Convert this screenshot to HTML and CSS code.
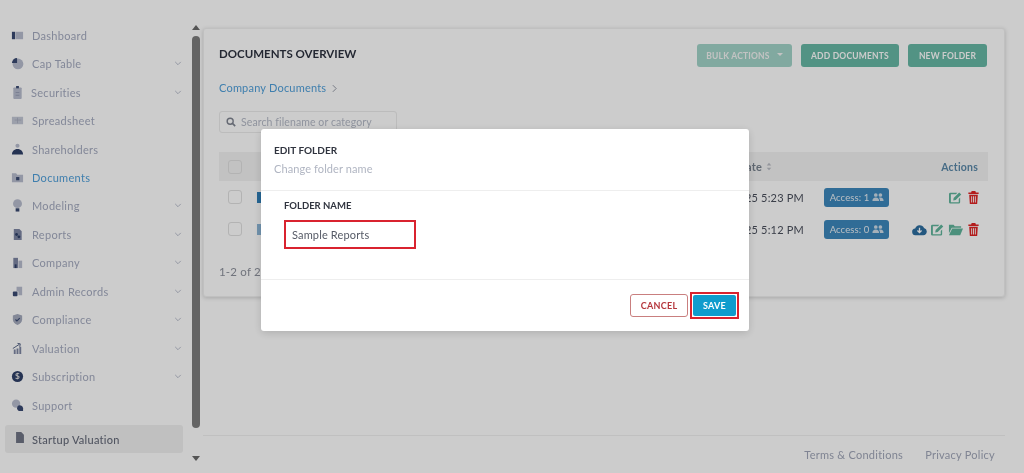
FILE: index.html
```html
<!DOCTYPE html>
<html lang="en">
<head>
<meta charset="utf-8">
<title>Documents Overview</title>
<link rel="stylesheet" href="styles.css">
</head>
<body>
<svg class="defs" width="0" height="0" aria-hidden="true">
  <symbol id="chev" viewBox="0 0 10 6"><path d="M1.5 1l3.5 3.5L8.5 1" fill="none" stroke="currentColor" stroke-width="1.1"/></symbol>
  <symbol id="edit" viewBox="0 0 16 14"><path d="M2.5 2h7.5l-1.5 1.500h-5.500v8.500h8.500v-3.500l1.500-1.500v5a1.500 1.500 0 0 1-1.500 1.500h-9a1.500 1.500 0 0 1-1.500-1.500v-8.500a1.500 1.500 0 0 1 1.500-1.500z" fill="currentColor"/><path d="M6 7.500l6-6 2.200 2.200-6 6-2.600.4z" fill="currentColor"/></symbol>
  <symbol id="trash" viewBox="0 0 12 14"><path d="M4 0h4l.6 1.500h3v1.600h-11.200v-1.600h3zM1.300 4h9.400l-.7 10h-8zM3.500 5.500v7h1v-7zM5.500 5.500v7h1v-7zM7.500 5.500v7h1v-7z" fill="currentColor" fill-rule="evenodd"/></symbol>
  <symbol id="users" viewBox="0 0 14 10"><circle cx="4.200" cy="2.500" r="2.300" fill="currentColor"/><circle cx="10" cy="2.500" r="2.300" fill="currentColor"/><path d="M0 10c0-3 1.500-4.500 4.200-4.500s4.200 1.500 4.200 4.500zM9.500 10c0-1.800-.4-3.300-1.300-4.200.6-.2 1.200-.3 1.900-.3 2.500 0 3.900 1.500 3.900 4.500z" fill="currentColor"/></symbol>
</svg>

<div class="page">
  <aside class="sidebar">
    <nav class="nav">
      <a class="nav-item"><svg class="nav-icon" viewBox="0 0 14 14"><rect x="1" y="3" width="3.500" height="8" fill="#3a4a72"/><rect x="5" y="3" width="8" height="8" fill="#b8bdcf"/></svg><span>Dashboard</span></a>
      <a class="nav-item has-sub"><svg class="nav-icon" viewBox="0 0 14 14"><circle cx="7.500" cy="7.500" r="5.800" fill="#b8bdcf"/><path d="M6.500 1v5.500H1A5.500 5.500 0 0 1 6.500 1z" fill="#3a4a72"/></svg><span>Cap Table</span><svg class="chev"><use href="#chev"/></svg></a>
      <a class="nav-item has-sub tight"><svg class="nav-icon" viewBox="0 0 14 14"><rect x="2.500" y="1.500" width="9" height="12.500" rx="1" fill="#b8bdcf"/><rect x="5.500" y="0" width="3" height="2.500" fill="#3a4a72"/><path d="M5 7h4M5 10h4" stroke="#8e95ad" stroke-width=".8"/></svg><span>Securities</span><svg class="chev"><use href="#chev"/></svg></a>
      <a class="nav-item"><svg class="nav-icon" viewBox="0 0 14 14"><rect x="1" y="3" width="12" height="8" fill="#c4c8d6"/><path d="M7 4v6M4 6.500h7" stroke="#a4aabd" stroke-width=".8"/></svg><span>Spreadsheet</span></a>
      <a class="nav-item"><svg class="nav-icon" viewBox="0 0 14 14"><circle cx="7" cy="3" r="2.200" fill="#b8bdcf"/><path d="M1 12.500c0-3.500 2.500-6 6-6s6 2.500 6 6z" fill="#2f4068"/></svg><span>Shareholders</span></a>
      <a class="nav-item current"><svg class="nav-icon" viewBox="0 0 14 14"><path d="M1 2.500h4.500l1.200 1.500h6.300v8h-12z" fill="#b8bdcf"/><rect x="5.500" y="6.500" width="3.500" height="3.500" fill="#3a4a72"/></svg><span>Documents</span></a>
      <a class="nav-item has-sub"><svg class="nav-icon" viewBox="0 0 14 14"><circle cx="7" cy="5" r="4.800" fill="#b8bdcf"/><rect x="5" y="10" width="4" height="3.500" fill="#3a4a72"/></svg><span>Modeling</span><svg class="chev"><use href="#chev"/></svg></a>
      <a class="nav-item has-sub"><svg class="nav-icon" viewBox="0 0 14 14"><path d="M3 1h6l2.500 2.500V13H3z" fill="#7d86a3"/><circle cx="6" cy="7" r="1.500" fill="#2f4068"/><circle cx="8.500" cy="9.500" r="1.500" fill="#2f4068"/></svg><span>Reports</span><svg class="chev"><use href="#chev"/></svg></a>
      <a class="nav-item has-sub"><svg class="nav-icon" viewBox="0 0 14 14"><rect x="2.500" y="2" width="5" height="11" fill="#7d86a3"/><rect x="8" y="5" width="4" height="8" fill="#b8bdcf"/><rect x="4" y="9" width="2" height="4" fill="#2f4068"/></svg><span>Company</span><svg class="chev"><use href="#chev"/></svg></a>
      <a class="nav-item has-sub"><svg class="nav-icon" viewBox="0 0 14 14"><path d="M6 2h6v9H8V7H6z" fill="#b8bdcf"/><rect x="2" y="7" width="5" height="5" rx="1" fill="#3a4a72"/></svg><span>Admin Records</span><svg class="chev"><use href="#chev"/></svg></a>
      <a class="nav-item has-sub"><svg class="nav-icon" viewBox="0 0 14 14"><path d="M7 1l5 1.800v4c0 3-2 5-5 6.200-3-1.200-5-3.200-5-6.200v-4z" fill="#a4aabd"/><path d="M4.800 7l1.600 1.600L9.400 5.600" fill="none" stroke="#3a4a72" stroke-width="1.200"/></svg><span>Compliance</span><svg class="chev"><use href="#chev"/></svg></a>
      <a class="nav-item has-sub"><svg class="nav-icon" viewBox="0 0 14 14"><path d="M3 8h2v5H3zM6 7h2v6H6zM9 5h2v8H9z" fill="#7d86a3"/><path d="M2 7l7-4.500M7 1.500l3 .5-.6 3" fill="none" stroke="#3a4a72" stroke-width=".9"/></svg><span>Valuation</span><svg class="chev"><use href="#chev"/></svg></a>
      <a class="nav-item has-sub"><svg class="nav-icon" viewBox="0 0 14 14"><circle cx="7" cy="7" r="6" fill="#2f4068"/><text class="dollar" x="7" y="10">$</text></svg><span>Subscription</span><svg class="chev"><use href="#chev"/></svg></a>
      <a class="nav-item"><svg class="nav-icon" viewBox="0 0 14 14"><circle cx="5.500" cy="5" r="4.500" fill="#b8bdcf"/><path d="M8 7a3.500 3.500 0 0 1 5 3v3H8.500a3.500 3.500 0 0 1-.5-6z" fill="#3a4a72"/></svg><span>Support</span></a>
    </nav>
    <a class="startup"><svg class="startup-icon" viewBox="0 0 12 14"><path d="M1 0h6.500L11 3.500V14H1z" fill="#707585"/></svg><span>Startup Valuation</span></a>
  </aside>

  <div class="scrollbar">
    <span class="arrow up"></span>
    <span class="thumb"></span>
    <span class="arrow down"></span>
  </div>

  <main class="main">
    <section class="card">
      <header class="card-head">
        <h1>DOCUMENTS OVERVIEW</h1>
        <div class="actions">
          <button class="btn faded">BULK ACTIONS<i class="caret"></i></button>
          <button class="btn">ADD DOCUMENTS</button>
          <button class="btn">NEW FOLDER</button>
        </div>
      </header>
      <div class="crumb">Company Documents <svg class="crumb-chev" viewBox="0 0 6 10"><path d="M1 1l4 4-4 4" fill="none" stroke="currentColor" stroke-width="1.100"/></svg></div>
      <div class="search">
        <svg class="search-icon" viewBox="0 0 12 12"><circle cx="5" cy="5" r="3.600" fill="none" stroke="currentColor" stroke-width="1.700"/><path d="M7.700 7.700L11 11" stroke="currentColor" stroke-width="1.900"/></svg>
        <span>Search filename or category</span>
      </div>
      <div class="table">
        <div class="row head">
          <span class="check"></span>
          <span class="name"></span>
          <span class="date">Date <svg class="sort" viewBox="0 0 8 12"><path d="M4 1l3 3.500H1zM4 11L1 7.500h6z" fill="currentColor"/></svg></span>
          <span class="access-col"></span>
          <span class="act head-act">Actions</span>
        </div>
        <div class="row">
          <span class="check"></span>
          <span class="name"><i class="file-mark"></i></span>
          <span class="date">Mar 12, 2025 5:23 PM</span>
          <span class="access-col"><span class="access">Access: 1 <svg class="users"><use href="#users"/></svg></span></span>
          <span class="act"><svg class="ic green"><use href="#edit"/></svg><svg class="ic-t red"><use href="#trash"/></svg></span>
        </div>
        <div class="row">
          <span class="check"></span>
          <span class="name"><i class="file-mark light"></i></span>
          <span class="date">Mar 12, 2025 5:12 PM</span>
          <span class="access-col"><span class="access">Access: 0 <svg class="users"><use href="#users"/></svg></span></span>
          <span class="act">
            <svg class="ic blue" viewBox="0 0 16 12"><path d="M4 12a3.500 3.500 0 0 1-.6-7A5 5 0 0 1 12.800 4.500 3.800 3.800 0 0 1 12 12z" fill="currentColor"/><path d="M8 4v5M5.800 7L8 9.300 10.200 7" fill="none" stroke="#fff" stroke-width="1.400"/></svg>
            <svg class="ic green"><use href="#edit"/></svg>
            <svg class="ic green" viewBox="0 0 16 12"><path d="M1 1h5l1.200 1.500H14V4H4L1 10z" fill="currentColor"/><path d="M4.500 5H16l-3 7H1z" fill="currentColor"/></svg>
            <svg class="ic-t red"><use href="#trash"/></svg>
          </span>
        </div>
      </div>
      <div class="count">1-2 of 2 items</div>
    </section>
    <footer class="footer">
      <a>Terms &amp; Conditions</a>
      <a>Privacy Policy</a>
    </footer>
  </main>
</div>

<div class="overlay">
  <div class="modal">
    <div class="modal-head">
      <h2>EDIT FOLDER</h2>
      <p>Change folder name</p>
    </div>
    <div class="modal-body">
      <label>FOLDER NAME</label>
      <div class="input">Sample Reports</div>
    </div>
    <div class="modal-foot">
      <button class="cancel">CANCEL</button>
      <span class="save-ring"><button class="save">SAVE</button></span>
    </div>
  </div>
</div>
</body>
</html>
```
FILE: styles.css
```css
* { box-sizing: border-box; }
html, body { margin: 0; height: 473px; overflow: hidden; }
body { background: #fff; font-family: "Lato", sans-serif; color: #3a3f4d; position: relative; }
.defs { position: absolute; }
button { font-family: inherit; border: 0; }

.page { display: flex; height: 473px; filter: blur(.35px); }

/* sidebar */
.sidebar { width: 192px; padding: 21px 0 0 5px; flex: none; display: flex; flex-direction: column; }
.nav { display: flex; flex-direction: column; }
.nav-item { display: flex; align-items: center; height: 28.46px; padding-left: 6px; font-size: 11px; letter-spacing: .3px; color: #a4aabf; width: 178px; }
.nav-item.tight span { margin-left: -1px; }
.nav-item span { flex: 1; }
.nav-item.current { color: #4f9fda; }
.nav-icon { width: 13px; height: 13px; margin-right: 8px; flex: none; }
.chev { width: 8px; height: 5px; color: #b0b5c6; margin-right: 1px; }
.dollar { font: 700 9px "Lato", sans-serif; fill: #ddd; text-anchor: middle; }
.startup { display: flex; align-items: center; gap: 7px; width: 178px; height: 28px; margin-top: 6px; padding-left: 10px; background: #f1f1f1; border-radius: 3px; font-size: 11px; font-weight: 500; letter-spacing: .25px; color: #666b7a; }
.startup-icon { width: 10px; height: 11px; margin-top: -3px; flex: none; }

/* scrollbar */
.scrollbar { width: 8px; flex: none; display: flex; flex-direction: column; align-items: center; padding-top: 25px; }
.arrow { width: 0; height: 0; border-left: 4px solid transparent; border-right: 4px solid transparent; }
.arrow.up { border-bottom: 5px solid #6a6a6a; }
.arrow.down { border-top: 5px solid #6a6a6a; margin-top: 28px; }
.thumb { width: 8px; height: 392px; margin-top: 6px; border-radius: 4px; background: #7e7e7e; }

/* main */
.main { flex: 1; padding: 28px 19px 0 3px; display: flex; flex-direction: column; }
.card { height: 269px; border: 1px solid #f0f0f0; border-radius: 3px; box-shadow: 0 1px 4px rgba(0,0,0,.18); padding: 16px 16px 0 15px; background: #fff; }
.card-head { display: flex; justify-content: space-between; height: 28px; }
.card-head h1 { margin: 0; font-size: 11.500px; font-weight: 700; color: #2e3340; line-height: 18px; }
.actions { display: flex; gap: 9px; margin: -1px 1px 0 0; }
.btn { height: 23px; padding: 0; font-size: 8.500px; font-weight: 700; letter-spacing: .2px; border-radius: 3px; color: #fff; background: #67b8a5; }
.btn.faded { width: 95px; justify-content: center; background: #a2d4c8; color: #f4f4f4; display: flex; align-items: center; }
.actions .btn:nth-child(2) { width: 98px; }
.actions .btn:nth-child(3) { width: 79px; }
.caret { display: inline-block; margin-left: 7px; margin-bottom: 2px; border-left: 3px solid transparent; border-right: 3px solid transparent; border-top: 3px solid #f4f4f4; }
.crumb { margin-top: 7px; height: 16px; line-height: 16px; font-size: 11px; letter-spacing: .2px; color: #4f9fda; display: flex; align-items: center; gap: 6px; }
.crumb-chev { width: 5px; height: 9px; color: #8a8f9e; }
.search { margin-top: 15px; width: 178px; height: 22px; border: 1px solid #ebebeb; border-radius: 3px; display: flex; align-items: center; padding-left: 6px; font-size: 10.500px; letter-spacing: .1px; color: #b4b9c6; gap: 5px; }
.search-icon { width: 10px; height: 10px; color: #7f8490; flex: none; }
.table { margin-top: 19px; }
.row { display: flex; align-items: center; height: 32px; font-size: 11px; letter-spacing: .2px; color: #4a4f5c; }
.row.head { height: 29px; background: #f3f3f3; color: #5a88a8; }
.check { width: 14px; height: 14px; margin-left: 9px; border: 1px solid #e0e0e0; border-radius: 3px; flex: none; }
.name { flex: 1; padding-left: 15px; display: flex; align-items: center; }
.file-mark { width: 5px; height: 11px; background: #2f7fb8; flex: none; }
.file-mark.light { background: #8db7d8; }
.date { width: 120px; flex: none; display: flex; align-items: center; justify-content: flex-end; gap: 4px; white-space: nowrap; }
.row.head .date { font-weight: 700; padding-right: 32px; color: #78828e; }
.sort { width: 6px; height: 9px; color: #b9bcc4; }
.access-col { width: 105px; flex: none; display: flex; justify-content: center; }
.access { display: inline-flex; align-items: center; gap: 3px; height: 19px; padding: 0 5px 0 6px; background: #3d88bc; color: #e8eef4; border-radius: 3px; font-size: 9.500px; white-space: nowrap; letter-spacing: .1px; }
.users { width: 12px; height: 8px; color: #cfdde8; }
.act { width: 79px; flex: none; display: flex; justify-content: flex-end; align-items: center; gap: 3px; padding-right: 9px; }
.head-act { font-weight: 700; font-size: 10.500px; color: #5a88a8; padding-right: 10px; }
.ic { width: 15px; height: 13px; flex: none; }
.ic-t { width: 11px; height: 13px; flex: none; margin-left: 2px; }
.green { color: #5fb59b; }
.red { color: #e02424; }
.blue { color: #2c6d9f; }
.count { margin-top: 20px; font-size: 11.500px; letter-spacing: .2px; color: #8d919c; line-height: 14px; }

.footer { margin-top: 138px; border-top: 1px solid #f0f0f0; height: 38px; display: flex; justify-content: flex-end; gap: 22px; align-items: center; padding-right: 10px; font-size: 11px; letter-spacing: .25px; color: #a0a6b8; }

/* overlay + modal */
.overlay { position: fixed; inset: 0; background: rgba(0,0,0,.2); padding: 129px 0 0 261px; }
.modal { width: 488px; height: 202px; background: #fff; border-radius: 3px; box-shadow: 0 2px 8px rgba(0,0,0,.15); display: flex; flex-direction: column; filter: blur(.35px); }
.modal-head { height: 62px; padding: 14px 13px 0; border-bottom: 1px solid #eee; }
.modal-head h2 { margin: 0; font-size: 10px; font-weight: 700; color: #30343f; line-height: 15px; }
.modal-head p { margin: 3px 0 0; font-size: 11px; letter-spacing: .1px; color: #b0b5c2; line-height: 15px; }
.modal-body { height: 89px; padding: 7px 23px 0; border-bottom: 1px solid #eee; }
.modal-body label { display: block; font-size: 9.500px; font-weight: 700; color: #30343f; line-height: 15px; }
.input { margin-top: 7px; width: 132px; height: 29px; border: 2px solid #d9232f; padding-left: 6px; display: flex; align-items: center; font-size: 11px; letter-spacing: .15px; color: #555a66; }
.modal-foot { flex: 1; display: flex; justify-content: flex-end; align-items: center; gap: 2px; padding-right: 10px; padding-bottom: 1px; }
.cancel { width: 58px; height: 23px; background: #fff; border: 1px solid #c97f7f; border-radius: 3px; color: #b5363c; font-size: 9px; font-weight: 700; letter-spacing: .3px; }
.save-ring { display: block; border: 2px solid #d9232f; padding: 1px; width: 49px; height: 27px; }
.save { display: block; width: 100%; height: 100%; background: #0f9ccd; color: #fff; border-radius: 2px; font-size: 9px; font-weight: 700; letter-spacing: .3px; padding: 0; }
```
